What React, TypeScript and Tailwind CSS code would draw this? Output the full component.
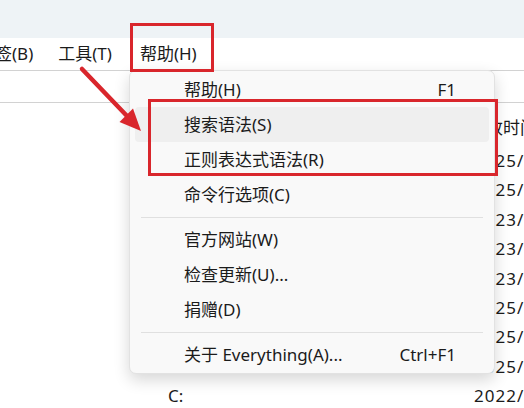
import React from 'react';

type MenuEntry = { label: string; shortcut?: string; active?: boolean } | 'sep';

const menuEntries: MenuEntry[] = [
  { label: '帮助(H)', shortcut: 'F1' },
  { label: '搜索语法(S)', active: true },
  { label: '正则表达式语法(R)' },
  { label: '命令行选项(C)' },
  'sep',
  { label: '官方网站(W)' },
  { label: '检查更新(U)...' },
  { label: '捐赠(D)' },
  'sep',
  { label: '关于 Everything(A)...', shortcut: 'Ctrl+F1' },
];

// only the tail of the date column and the last path are visible past the menu
const rows = [
  { path: '', date: '2025/03/18 09:12' },
  { path: '', date: '2025/02/27 21:40' },
  { path: '', date: '2023/11/05 14:03' },
  { path: '', date: '2023/10/21 08:55' },
  { path: '', date: '2023/09/14 17:26' },
  { path: '', date: '2025/01/09 11:48' },
  { path: '', date: '2025/03/02 19:30' },
  { path: '', date: '2025/03/11 07:15' },
  { path: 'C:', date: '2022/05/07 10:21' },
];

function ContextMenu() {
  return (
    <div className="absolute left-[129px] top-[70px] w-[366px] py-[1px] rounded-[7px] border border-[#e2e2e2] bg-[#f9f9f9] shadow-[0_6px_16px_rgba(0,0,0,0.16)]">
      {menuEntries.map((entry, i) =>
        entry === 'sep' ? (
          <div key={i} className="h-[10px] flex items-center px-[11px]">
            <div className="h-px w-full bg-[#e0e0e0]" />
          </div>
        ) : (
          <div
            key={i}
            className={`h-[35px] mx-[5px] rounded-[4px] flex items-center pl-[49px] pr-[33px] ${
              entry.active ? 'bg-[#efefef]' : ''
            }`}
          >
            <span className="whitespace-nowrap">{entry.label}</span>
            {entry.shortcut && <span className="ml-auto whitespace-nowrap">{entry.shortcut}</span>}
          </div>
        )
      )}
    </div>
  );
}

function Arrow() {
  // red annotation arrow pointing at the highlighted items
  return (
    <svg className="absolute left-0 top-0" width="524" height="408" viewBox="0 0 524 408">
      <line x1="82" y1="69" x2="127" y2="116" stroke="#d9262c" strokeWidth="4.5" strokeLinecap="round" />
      <polygon points="141,131 119.5,122 133,108.5" fill="#d9262c" />
    </svg>
  );
}

export default function App() {
  return (
    <div
      className="relative w-[524px] h-[408px] overflow-hidden bg-white text-[17px] text-[#1b1b1b]"
      style={{ fontFamily: '"Segoe UI", "Noto Sans", "Noto Sans CJK SC", sans-serif' }}
    >
      {/* title bar */}
      <div className="h-[38px] bg-[#eef3f6]" />

      {/* menu bar */}
      <div className="h-[33px] flex items-center border-b border-[#d2d2d2] whitespace-nowrap">
        <span className="shrink-0 ml-[-22px]">书签(B)</span>
        <span className="shrink-0 ml-[25px]">工具(T)</span>
        <span className="shrink-0 ml-[28px]">帮助(H)</span>
      </div>

      {/* search edit */}
      <div className="h-[32px] border-b border-[#d2d2d2]" />

      {/* result list */}
      <div className="h-[43px] flex items-center pt-[6px] whitespace-nowrap">
        <span className="shrink-0 pl-[469px]">修改时间</span>
      </div>
      {rows.map((r, i) => (
        <div key={i} className="h-[29.4px] flex items-center whitespace-nowrap">
          <span className="shrink-0 pl-[168px] w-[474px]">{r.path}</span>
          <span className="shrink-0 tracking-[1px]">{r.date}</span>
        </div>
      ))}

      <ContextMenu />

      {/* annotations */}
      <div className="absolute left-[130px] top-[23px] w-[84px] h-[49px] border-[3px] border-[#d9262c]" />
      <div className="absolute left-[148px] top-[99px] w-[350px] h-[77px] border-[3px] border-[#d9262c]" />
      <Arrow />
    </div>
  );
}
